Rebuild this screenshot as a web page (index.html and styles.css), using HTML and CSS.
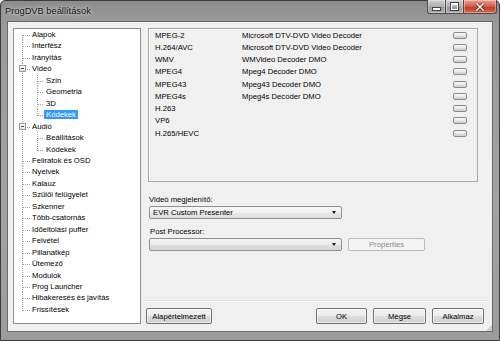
FILE: index.html
```html
<!DOCTYPE html>
<html lang="hu">
<head>
    <meta charset="UTF-8">
    <title>ProgDVB beállítások</title>
    <link rel="stylesheet" href="styles.css">
</head>
<body>
    <div class="window">
        <div class="titlebar">
            <span class="title">ProgDVB beállítások</span>
            <div class="caption-btns">
                <span class="cbtn cbtn-min"><i></i></span>
                <span class="cbtn cbtn-max"><i></i></span>
                <span class="cbtn cbtn-close">
                    <svg width="10" height="8" viewBox="0 0 10 8"><path d="M1.5 0.5 L8.5 7.5 M8.5 0.5 L1.5 7.5" stroke="#5a1a10" stroke-width="3"/><path d="M1.5 0.5 L8.5 7.5 M8.5 0.5 L1.5 7.5" stroke="#fff" stroke-width="1.6"/></svg>
                </span>
            </div>
        </div>

        <div class="client">
            <div class="tree">
                <ul class="nodes">
                    <li><span class="label">Alapok</span></li>
                    <li><span class="label">Interfész</span></li>
                    <li><span class="label">Irányítás</span></li>
                    <li><span class="expander"></span><span class="label">Videó</span>
                        <ul class="sub">
                            <li><span class="label">Szín</span></li>
                            <li><span class="label">Geometria</span></li>
                            <li><span class="label">3D</span></li>
                            <li><span class="label selected">Kódekek</span></li>
                        </ul>
                    </li>
                    <li><span class="expander"></span><span class="label">Audió</span>
                        <ul class="sub">
                            <li><span class="label">Beállítások</span></li>
                            <li><span class="label">Kódekek</span></li>
                        </ul>
                    </li>
                    <li><span class="label">Feliratok és OSD</span></li>
                    <li><span class="label">Nyelvek</span></li>
                    <li><span class="label">Kalauz</span></li>
                    <li><span class="label">Szülői felügyelet</span></li>
                    <li><span class="label">Szkenner</span></li>
                    <li><span class="label">Több-csatornás</span></li>
                    <li><span class="label">Időeltolási puffer</span></li>
                    <li><span class="label">Felvétel</span></li>
                    <li><span class="label">Pillanatkép</span></li>
                    <li><span class="label">Ütemező</span></li>
                    <li><span class="label">Modulok</span></li>
                    <li><span class="label">Prog Launcher</span></li>
                    <li><span class="label">Hibakeresés és javítás</span></li>
                    <li><span class="label">Frissítések</span></li>
                </ul>
            </div>

            <div class="main">
                <div class="codecs">
                    <div class="codec"><span>MPEG-2</span><span>Microsoft DTV-DVD Video Decoder</span><button class="mini"></button></div>
                    <div class="codec"><span>H.264/AVC</span><span>Microsoft DTV-DVD Video Decoder</span><button class="mini"></button></div>
                    <div class="codec"><span>WMV</span><span>WMVideo Decoder DMO</span><button class="mini"></button></div>
                    <div class="codec"><span>MPEG4</span><span>Mpeg4 Decoder DMO</span><button class="mini"></button></div>
                    <div class="codec"><span>MPEG43</span><span>Mpeg43 Decoder DMO</span><button class="mini"></button></div>
                    <div class="codec"><span>MPEG4s</span><span>Mpeg4s Decoder DMO</span><button class="mini"></button></div>
                    <div class="codec"><span>H.263</span><span></span><button class="mini"></button></div>
                    <div class="codec"><span>VP6</span><span></span><button class="mini"></button></div>
                    <div class="codec"><span>H.265/HEVC</span><span></span><button class="mini"></button></div>
                </div>

                <div class="field-label">Videó megjelenítő:</div>
                <div class="combo combo-renderer"><span>EVR Custom Presenter</span><span class="arrow"></span></div>

                <div class="field-label field-label-post">Post Processor:</div>
                <div class="row">
                    <div class="combo"><span></span><span class="arrow"></span></div>
                    <button class="btn btn-props" disabled>Properties</button>
                </div>

                <div class="footer">
                    <button class="btn btn-default">Alapértelmezett</button>
                    <button class="btn btn-ok">OK</button>
                    <button class="btn">Mégse</button>
                    <button class="btn">Alkalmaz</button>
                </div>
            </div>
        </div>
        <span class="grip"></span>
    </div>
</body>
</html>
```

FILE: styles.css
```css
html, body {
    margin: 0;
    padding: 0;
}
body {
    width: 500px;
    height: 341px;
    overflow: hidden;
    font-family: "Liberation Sans", Arial, sans-serif;
    font-size: 7.7px;
    color: #000;
}
.window {
    position: relative;
    box-sizing: border-box;
    width: 500px;
    height: 341px;
    border: 1px solid #3c3c3c;
    border-radius: 5px 5px 0 0;
    background: linear-gradient(to bottom, #8c8c8c, #9a9a9a 20px, #a2a2a2 60%, #9c9c9c);
    display: flex;
    flex-direction: column;
}

/* заголовок окна */
.titlebar {
    height: 20px;
    display: flex;
    align-items: flex-start;
    justify-content: space-between;
}
.title {
    margin: 5px 0 0 4px;
    font-size: 9.3px;
    line-height: 11px;
    color: #101010;
    text-shadow: 0 0 5px rgba(255, 255, 255, 0.7), 0 0 2px rgba(255, 255, 255, 0.5);
}
.caption-btns {
    display: flex;
    margin: -1px 2px 0 0;
}
.cbtn {
    box-sizing: border-box;
    height: 14px;
    display: flex;
    align-items: center;
    justify-content: center;
    border: 1px solid #4b4b4b;
    border-top: none;
    background: linear-gradient(to bottom, #cfcfcf, #b0b0b0 50%, #9a9a9a 51%, #a8a8a8);
    box-shadow: inset 0 0 0 1px rgba(255, 255, 255, 0.35);
}
.cbtn-min {
    width: 18px;
    border-right: none;
    border-radius: 0 0 0 3px;
}
.cbtn-min i {
    width: 7px;
    height: 2px;
    margin-top: 5px;
    background: #fff;
    border: 1px solid #444;
}
.cbtn-max {
    width: 18px;
    border-right: none;
}
.cbtn-max i {
    width: 5px;
    height: 4px;
    border: 1px solid #fff;
    border-top-width: 2px;
    outline: 1px solid #444;
}
.cbtn-close {
    width: 34px;
    border-radius: 0 0 3px 0;
    background: linear-gradient(to bottom, #e8a294, #d45a44 50%, #c23a22 51%, #d06a50);
}

/* клиентская область */
.client {
    flex: 1;
    margin: 0 6px 8px 6px;
    border: 1px solid #6a6a6a;
    background: #f0f0f0;
    display: flex;
    padding: 6px 2px 7px 5px;
}

/* дерево настроек */
.tree {
    box-sizing: border-box;
    width: 128px;
    border: 1px solid #8f9092;
    background: #fff;
    overflow: hidden;
}
.tree ul {
    list-style: none;
    margin: 0;
    padding: 0;
}
.tree li {
    padding-left: 18px;
    line-height: 11.45px;
    white-space: nowrap;
    background:
        repeating-linear-gradient(to bottom, #a0a0a0 0 1px, transparent 1px 2px) 8px 0 / 1px 100% no-repeat,
        repeating-linear-gradient(to right, #a0a0a0 0 1px, transparent 1px 2px) 9px 6px / 7px 1px no-repeat;
}
.tree li:first-child {
    background-position: 8px 6px, 9px 6px;
}
.tree li:last-child {
    background-size: 1px 7px, 7px 1px;
}
.nodes > li:first-child:last-child {
    background-size: 1px 1px, 7px 1px;
}
.tree .sub {
    margin-left: -3px;
}
.tree .sub li {
    padding-left: 17px;
    background:
        repeating-linear-gradient(to bottom, #a0a0a0 0 1px, transparent 1px 2px) 8px 0 / 1px 100% no-repeat,
        repeating-linear-gradient(to right, #a0a0a0 0 1px, transparent 1px 2px) 9px 6px / 6px 1px no-repeat;
}
.tree .sub li:first-child {
    background-position: 8px 0, 9px 6px;
}
.tree .sub li:last-child {
    background-size: 1px 7px, 6px 1px;
}
.expander {
    display: inline-block;
    box-sizing: border-box;
    width: 7px;
    height: 7px;
    margin: 0 6px 0 -13px;
    vertical-align: -1px;
    border: 1px solid #97a0a8;
    background:
        linear-gradient(#40505e, #40505e) center / 3px 1px no-repeat,
        linear-gradient(to bottom, #fff, #dfe3e6);
}
.label {
    display: inline-block;
}
.label.selected {
    background: #3399ff;
    color: #fff;
    line-height: 9px;
    padding: 0 2px;
    margin-left: -2px;
}

/* правая часть */
.main {
    flex: 1;
    margin-left: 2px;
    display: flex;
    flex-direction: column;
}
.codecs {
    box-sizing: border-box;
    width: 330px;
    height: 154px;
    margin-left: 5px;
    border: 1px solid #a8a8a8;
    box-shadow: inset 1px 1px 0 #fff;
}
.codec {
    display: grid;
    grid-template-columns: 87px 1fr 14px;
    align-items: center;
    height: 12.25px;
    padding: 0 10px 0 6px;
    white-space: nowrap;
}
.mini {
    box-sizing: border-box;
    width: 14px;
    height: 7px;
    padding: 0;
    border: 1px solid #8a8a8a;
    border-radius: 2px;
    background: linear-gradient(to bottom, #fbfbfb, #e9e9e9 50%, #dcdcdc 51%, #d2d2d2);
}

.field-label {
    margin: 13px 0 0 6px;
    line-height: 10px;
}
.field-label-post {
    margin-top: 8px;
    margin-left: 7px;
}
.combo {
    box-sizing: border-box;
    width: 193px;
    height: 13px;
    margin: 1px 0 0 6px;
    padding: 0 5px 0 3px;
    display: flex;
    align-items: center;
    justify-content: space-between;
    border: 1px solid #8e8f8f;
    border-radius: 2px;
    background: linear-gradient(to bottom, #f4f4f4, #ececec 50%, #dfdfdf 51%, #d7d7d7);
}
.combo-renderer {
    background: linear-gradient(to bottom, #f7f7f7, #f0f0f0 50%, #e6e6e6 51%, #e0e0e0);
}
.arrow {
    width: 0;
    height: 0;
    border-left: 2.5px solid transparent;
    border-right: 2.5px solid transparent;
    border-top: 3px solid #1a1a1a;
}
.row {
    display: flex;
    align-items: flex-start;
}
.row .combo {
    margin-top: 1px;
}

.btn {
    box-sizing: border-box;
    height: 16px;
    padding: 0;
    font-family: inherit;
    font-size: 7.7px;
    color: #000;
    border: 1px solid #707070;
    border-radius: 2px;
    background: linear-gradient(to bottom, #f2f2f2, #ebebeb 50%, #dddddd 51%, #cfcfcf);
    box-shadow: inset 0 0 0 1px rgba(255, 255, 255, 0.6);
}
.btn-props {
    width: 77px;
    height: 13px;
    margin: 1px 0 0 6px;
    color: #8a8a8a;
    border-color: #b8bcbe;
    background: #f4f4f4;
    box-shadow: none;
}
.footer {
    margin-top: auto;
    margin-right: 2px;
    padding: 7px 4px 0 3px;
    border-top: 1px solid #dfdfdf;
    box-shadow: inset 0 1px 0 #fff;
    display: flex;
    gap: 6px;
}
.btn-default {
    width: 66px;
    margin-right: auto;
}
.footer .btn {
    min-width: 51px;
}
.footer .btn:nth-child(3) {
    width: 53px;
}
.footer .btn:nth-child(4) {
    width: 52px;
}

/* уголок для изменения размера */
.grip {
    position: absolute;
    right: 7px;
    bottom: 9px;
    width: 6px;
    height: 6px;
    background: radial-gradient(circle, #b8b8b8 0.6px, transparent 0.9px) 0 0 / 2px 2px;
    clip-path: polygon(100% 0, 100% 100%, 0 100%);
}
```
